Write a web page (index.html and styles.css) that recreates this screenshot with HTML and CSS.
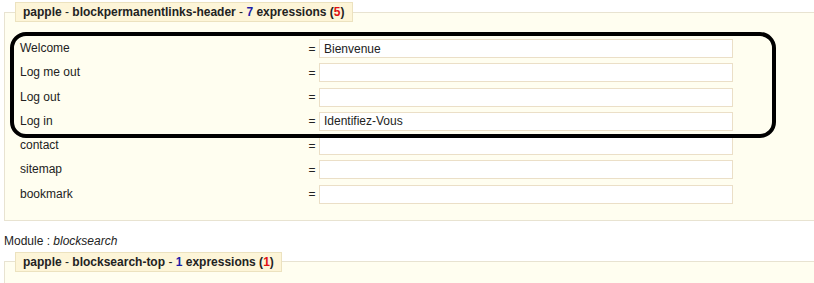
FILE: index.html
```html
<!DOCTYPE html>
<html lang="fr">
<head>
    <meta charset="UTF-8">
    <title>Traductions - modules</title>
    <link rel="stylesheet" href="styles.css">
</head>
<body>

<div class="module">
    <fieldset class="block">
        <legend><b>papple</b> - <b>blockpermanentlinks-header</b> - <b class="count">7</b> <b>expressions (<span class="missing">5</span>)</b></legend>
        <div class="rows">
            <label>Welcome</label><span class="eq">=</span><input type="text" value="Bienvenue">
            <label>Log me out</label><span class="eq">=</span><input type="text" value="">
            <label>Log out</label><span class="eq">=</span><input type="text" value="">
            <label>Log in</label><span class="eq">=</span><input type="text" value="Identifiez-Vous">
            <label>contact</label><span class="eq">=</span><input type="text" value="">
            <label>sitemap</label><span class="eq">=</span><input type="text" value="">
            <label>bookmark</label><span class="eq">=</span><input type="text" value="">
        </div>
    </fieldset>
    <div class="highlight"></div>
</div>

<p class="module-name">Module : <em>blocksearch</em></p>

<fieldset class="block">
    <legend><b>papple</b> - <b>blocksearch-top</b> - <b class="count">1</b> <b>expressions (<span class="missing">1</span>)</b></legend>
    <div class="rows"></div>
</fieldset>

</body>
</html>
```

FILE: styles.css
```css
html {
    overflow: hidden;
}
body {
    margin: 0;
    padding: 2px 0 0 4px;
    font-family: "Liberation Sans", Arial, sans-serif;
    font-size: 12px;
    color: #222;
    background-color: white;
}
.module {
    position: relative;
}
.block {
    width: 840px;
    margin: 0;
    padding: 17px 0 16px 15px;
    border: 1px solid #e8e3d1;
    background-color: #fffef0;
}
.block legend {
    margin-left: -5px;
    padding: 2px 7px 2px 7px;
    background-color: #fdf5d8;
    border: 1px solid #ece2bf;
    font-size: 12px;
    color: #222;
}
.block legend .count {
    color: #1c1ca8;
}
.block legend .missing {
    color: #e01010;
}
.rows {
    display: grid;
    grid-template-columns: 287px 12px 414px;
    row-gap: 5.3px;
    align-items: center;
}
.rows label {
    line-height: 19px;
}
.rows .eq {
    text-align: center;
    padding-right: 2px;
}
.rows input {
    box-sizing: border-box;
    width: 414px;
    height: 19px;
    margin: 0;
    padding: 0 4px;
    border: 1px solid #ebdfc7;
    background-color: white;
    font-family: "Liberation Sans", Arial, sans-serif;
    font-size: 12px;
    color: #222;
}
.highlight {
    position: absolute;
    left: 6px;
    top: 30px;
    width: 758px;
    height: 98px;
    border: 4px solid black;
    border-radius: 16px;
}
.module-name {
    margin: 13px 0 4px 0;
}
```
